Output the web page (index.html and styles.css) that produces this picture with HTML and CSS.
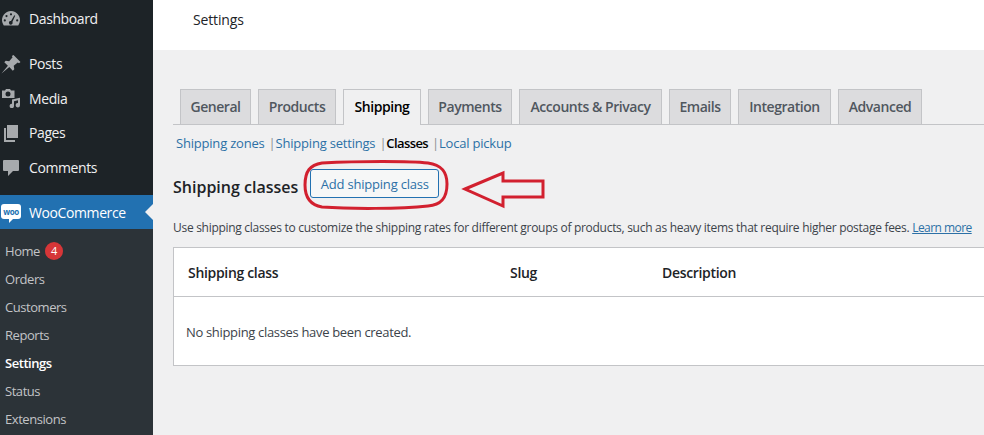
FILE: index.html
```html
<!DOCTYPE html>
<html lang="en">

<head>
    <meta charset="UTF-8">
    <title>Settings</title>
    <link rel="stylesheet" href="styles.css">
</head>

<body>
    <nav class="sidebar">
        <a class="menu-item menu-first" href="#">
            <svg class="menu-icon" viewBox="0 0 20 20"><path d="M10 2a9 9 0 0 0-8.600 11.600c.3 1 .8 2 1.400 2.900h14.400c.6-.9 1.100-1.900 1.400-2.900A9 9 0 0 0 10 2zM10 4.200a1.100 1.100 0 1 1 0 2.200 1.100 1.100 0 0 1 0-2.200zM5.500 6a1.100 1.100 0 1 1 0 2.200 1.100 1.100 0 0 1 0-2.200zM3.800 10.300a1.100 1.100 0 1 1 0 2.200 1.100 1.100 0 0 1 0-2.200zM16.200 10.300a1.100 1.100 0 1 1 0 2.200 1.100 1.100 0 0 1 0-2.200zM13.300 6.200l.9.5-2.800 6.300a1.800 1.800 0 1 1-2.200-.9c.3-.1.500-.1.800-.1z" fill-rule="evenodd"/></svg>
            Dashboard
        </a>
        <a class="menu-item menu-gap" href="#">
            <svg class="menu-icon" viewBox="0 0 20 20"><path d="M12.500 1l7 7-1.500 1.200-1.300-.8-4 3.400.6 3.500-1.500 1.400-3.500-3.600-7.800 6.400 6.400-7.800-3.600-3.500 1.400-1.500 3.500.6 3.400-4-.8-1.300z"/></svg>
            Posts
        </a>
        <a class="menu-item" href="#">
            <svg class="menu-icon" viewBox="0 0 20 20"><path d="M1 2.500h3L5 1h4l1 1.500h3.500V10H1zM7 3.500a2.500 2.500 0 1 0 0 5 2.500 2.500 0 0 0 0-5z" fill-rule="evenodd"/><path d="M11 11.500l8-1.700v7.400a2.200 2.200 0 1 1-2-2.200v-2.700l-4 .9v4.800a2.200 2.200 0 1 1-2-2.200z"/></svg>
            Media
        </a>
        <a class="menu-item" href="#">
            <svg class="menu-icon" viewBox="0 0 20 20"><path d="M6 2h11v13H6z"/><path d="M3 5h2v12h9v2H3z"/></svg>
            Pages
        </a>
        <a class="menu-item" href="#">
            <svg class="menu-icon" viewBox="0 0 20 20"><path d="M3 3h14a1 1 0 0 1 1 1v9a1 1 0 0 1-1 1h-5l-5 5v-5H3a1 1 0 0 1-1-1V4a1 1 0 0 1 1-1z"/></svg>
            Comments
        </a>
        <a class="menu-item menu-current" href="#">
            <span class="woo-logo">woo</span>
            WooCommerce
        </a>
        <ul class="submenu">
            <li><a href="#">Home <span class="count">4</span></a></li>
            <li><a href="#">Orders</a></li>
            <li><a href="#">Customers</a></li>
            <li><a href="#">Reports</a></li>
            <li><a class="active" href="#">Settings</a></li>
            <li><a href="#">Status</a></li>
            <li><a href="#">Extensions</a></li>
        </ul>
    </nav>

    <div class="page">
        <header class="top-bar">Settings</header>

        <main class="content">
            <div class="tabs">
                <a class="tab" href="#">General</a>
                <a class="tab" href="#">Products</a>
                <a class="tab tab-active" href="#">Shipping</a>
                <a class="tab" href="#">Payments</a>
                <a class="tab" href="#">Accounts &amp; Privacy</a>
                <a class="tab" href="#">Emails</a>
                <a class="tab" href="#">Integration</a>
                <a class="tab" href="#">Advanced</a>
            </div>

            <div class="subnav">
                <a href="#">Shipping zones</a><span class="sep">|</span><a href="#">Shipping settings</a><span class="sep">|</span><b>Classes</b><span class="sep">|</span><a href="#">Local pickup</a>
            </div>

            <div class="title-row">
                <h2>Shipping classes</h2>
                <button class="add-button">Add shipping class</button>
            </div>

            <p class="intro">Use shipping classes to customize the shipping rates for different groups of products, such as heavy items that require higher postage fees. <a href="#">Learn more</a></p>

            <div class="classes-table">
                <div class="table-head">
                    <span class="col-name">Shipping class</span>
                    <span class="col-slug">Slug</span>
                    <span>Description</span>
                </div>
                <div class="table-empty">No shipping classes have been created.</div>
            </div>
        </main>
    </div>

    <!-- red callout around the add button -->
    <svg class="callout" viewBox="0 0 984 435">
        <path d="M322 163C360 161 410 161 428 163C442 165 447 172 447 184C447 197 442 205 428 206C400 209 350 209 322 207C310 205 305 197 305 185C305 171 310 165 322 163Z"/>
        <path d="M465 189L503 173V181H543V197H503V206Z"/>
    </svg>
</body>

</html>
```

FILE: styles.css
```css
* {
    box-sizing: border-box;
}

body {
    margin: 0;
    height: 435px;
    overflow: hidden;
    display: flex;
    background: #f0f0f1;
    color: #3c434a;
    font-family: "Open Sans", "Noto Sans", Arial, sans-serif;
    font-size: 13px;
    letter-spacing: -0.2px;
    position: relative;
}

a {
    text-decoration: none;
}

.sidebar {
    width: 153px;
    flex-shrink: 0;
    background: #1d2327;
    padding-top: 1.8px;
}

.menu-item {
    display: flex;
    align-items: center;
    height: 34.4px;
    color: #f0f0f1;
    font-size: 14px;
    letter-spacing: -0.4px;
}

.menu-gap {
    margin-top: 10.5px;
}

.menu-icon {
    width: 20px;
    height: 20px;
    margin: 0 8px 0 1px;
    fill: #a7aaad;
    flex-shrink: 0;
}

.menu-current {
    margin-top: 10.7px;
    background: #2271b1;
    color: #fff;
    position: relative;
}

.menu-current::after {
    content: "";
    position: absolute;
    right: 0;
    top: 9px;
    border: 8px solid transparent;
    border-right-color: #f0f0f1;
    border-left-width: 0;
}

.woo-logo {
    width: 20px;
    height: 15px;
    margin: -2px 8px 0 1px;
    border-radius: 3px;
    background: #fff;
    color: #2271b1;
    font-size: 8px;
    font-weight: 700;
    line-height: 15px;
    text-align: center;
    letter-spacing: -0.4px;
    position: relative;
}

/* little tail under the speech bubble */
.woo-logo::after {
    content: "";
    position: absolute;
    left: 8px;
    bottom: -4px;
    border-top: 4px solid #fff;
    border-right: 4px solid transparent;
}

.submenu {
    list-style: none;
    margin: 0;
    padding: 8px 0 0;
    height: 206px;
    background: #2c3338;
    letter-spacing: -0.45px;
}

.submenu li {
    height: 28px;
}

.submenu a {
    display: flex;
    align-items: center;
    gap: 5px;
    height: 28px;
    padding-left: 5px;
    color: #c3c4c7;
}

.submenu .active {
    color: #fff;
    font-weight: 600;
}

.count {
    width: 18px;
    height: 18px;
    border-radius: 50%;
    background: #d63638;
    color: #fff;
    font-size: 11px;
    line-height: 18px;
    text-align: center;
}

.page {
    flex: 1;
    min-width: 0;
}

.top-bar {
    height: 50px;
    padding: 10px 0 0 40px;
    background: #fff;
    color: #1d2327;
    font-size: 14px;
    letter-spacing: -0.15px;
}

.content {
    padding: 39px 0 0 20px;
    width: 851px;
}

.tabs {
    display: grid;
    grid-template-columns: 71px 78px 78px 84px 143px 62px 93px 84px;
    column-gap: 7px;
    height: 36px;
    padding-left: 7px;
    border-bottom: 1px solid #c3c4c7;
}

.tab {
    height: 35px;
    line-height: 33px;
    text-align: center;
    border: 1px solid #c3c4c7;
    border-bottom: 0;
    background: #dcdcde;
    color: #50575e;
    font-size: 14px;
    font-weight: 600;
    letter-spacing: -0.45px;
}

.tab-active {
    height: 36px;
    background: #f0f0f1;
    color: #000;
}

.subnav {
    margin-top: 9px;
    padding-left: 3px;
    height: 18px;
    line-height: 18px;
    color: #50575e;
}

.subnav a {
    color: #2c70a6;
}

.subnav b {
    color: #000;
    font-weight: 600;
    letter-spacing: -0.6px;
}

.sep {
    margin: 0 0 0 4px;
    color: #8c8f94;
}

.title-row {
    display: flex;
    align-items: center;
    gap: 12px;
    margin-top: 17px;
}

.title-row h2 {
    margin: 0;
    padding-top: 7px;
    color: #1d2327;
    font-size: 16px;
    font-weight: 600;
    letter-spacing: 0;
}

.add-button {
    width: 129px;
    height: 29px;
    padding: 1px 0 0;
    border: 1px solid #2271b1;
    border-radius: 3px;
    background: #f6f7f7;
    color: #2c70a6;
    font-family: inherit;
    font-size: 13px;
    letter-spacing: inherit;
}

.intro {
    margin: 21px 0 0;
    height: 18px;
    line-height: 18px;
    font-size: 12px;
    letter-spacing: -0.29px;
    white-space: nowrap;
}

.intro a {
    color: #2c70a6;
    text-decoration: underline;
    letter-spacing: -0.55px;
}

.classes-table {
    margin-top: 10px;
    height: 119px;
    background: #fff;
    border: 1px solid #c3c4c7;
    border-right: 0;
}

.table-head {
    display: flex;
    align-items: center;
    height: 49px;
    padding-left: 14px;
    border-bottom: 1px solid #c3c4c7;
    color: #1d2327;
    font-size: 14px;
    font-weight: 600;
    letter-spacing: -0.32px;
}

.col-name {
    width: 322px;
}

.col-slug {
    width: 152px;
}

.table-empty {
    padding: 26px 0 0 12px;
    line-height: 18px;
    letter-spacing: -0.33px;
}

.callout {
    position: absolute;
    left: 0;
    top: 0;
    width: 984px;
    height: 435px;
    pointer-events: none;
    fill: none;
    stroke: #d2202f;
    stroke-width: 3;
}
```
